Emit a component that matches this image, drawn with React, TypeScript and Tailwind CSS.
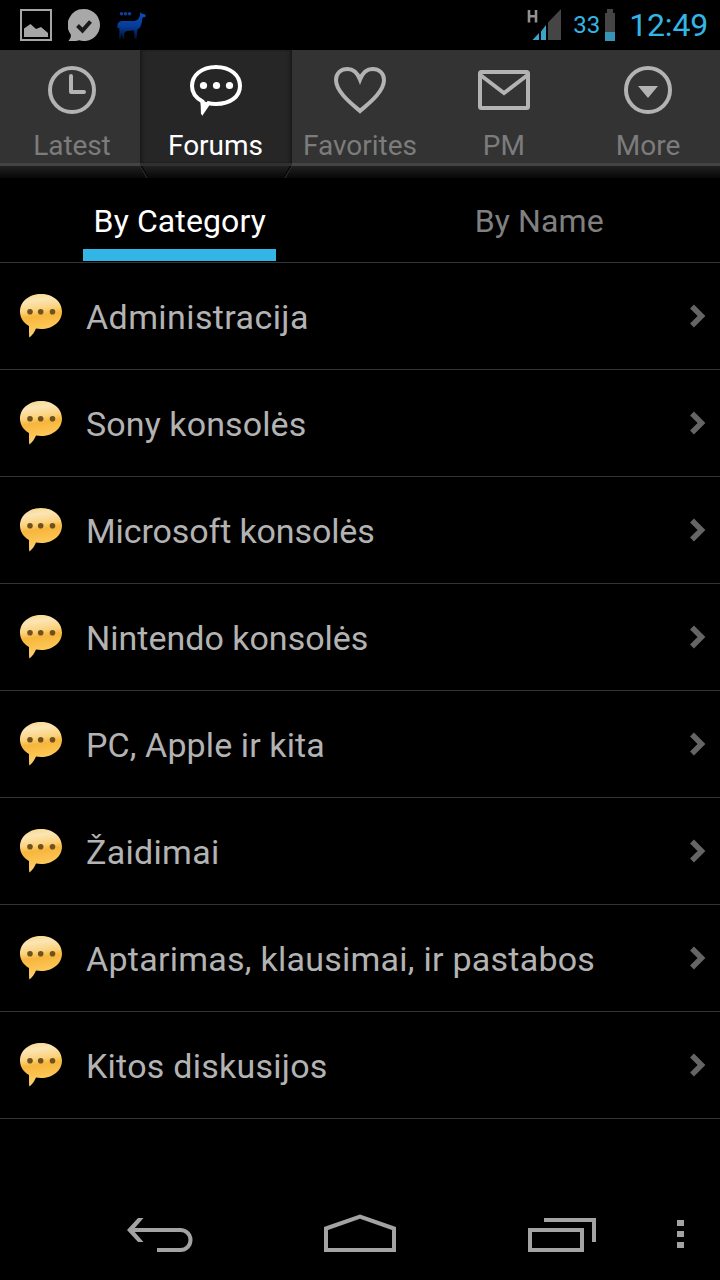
import { useState } from "react";
import type { ReactNode } from "react";
import clsx from "clsx";

const categories = [
  { name: "Administracija", tracking: "tracking-[0.4px]" },
  { name: "Sony konsolės", tracking: "tracking-[0.1px]" },
  { name: "Microsoft konsolės", tracking: "tracking-[-0.12px]" },
  { name: "Nintendo konsolės", tracking: "tracking-[0px]" },
  { name: "PC, Apple ir kita", tracking: "tracking-[0.1px]" },
  { name: "Žaidimai", tracking: "tracking-[0.3px]" },
  { name: "Aptarimas, klausimai, ir pastabos", tracking: "tracking-[0.25px]" },
  { name: "Kitos diskusijos", tracking: "tracking-[0.25px]" },
];

const ClockIcon = () => (
  <svg className="shrink-0" width="56" height="56" viewBox="0 0 56 56" fill="none" stroke="currentColor" strokeWidth="4">
    <circle cx="28" cy="28" r="22" />
    <path d="M27 14v16h13" strokeLinecap="round" strokeLinejoin="round" />
  </svg>
);

const BubbleIcon = () => (
  <svg className="shrink-0" width="56" height="56" viewBox="0 0 56 56" fill="none">
    <path
      d="M14.500 39.500C8 36 4 30.500 4 24C4 13.500 13.500 5 28 5C42.500 5 52 13.500 52 24C52 34.500 42.500 42 28 42C25.500 42 22.500 41.800 20.500 41.200L15.500 48.500Z"
      stroke="currentColor"
      strokeWidth="4"
    />
    <path d="M12.500 38L13 53Q18 48 21 41Z" fill="currentColor" />
    <circle cx="15.500" cy="23.500" r="3.600" fill="currentColor" />
    <circle cx="28.500" cy="23.500" r="3.600" fill="currentColor" />
    <circle cx="41.500" cy="23.500" r="3.600" fill="currentColor" />
  </svg>
);

const HeartIcon = () => (
  <svg className="shrink-0" width="56" height="56" viewBox="0 0 56 56" fill="none" stroke="currentColor" strokeWidth="4">
    <path d="M28 49C20 42 4 30 4 18C4 11 9 7 15.500 7C21.500 7 25.500 11 28 17.500C30.500 11 34.500 7 40.500 7C47 7 52 11 52 18C52 30 36 42 28 49Z" />
  </svg>
);

const MailIcon = () => (
  <svg className="shrink-0" width="56" height="56" viewBox="0 0 56 56" fill="none" stroke="currentColor" strokeWidth="4">
    <rect x="4" y="10" width="48" height="36" rx="1.500" />
    <path d="M5 13.500L28 31L51 13.500" />
  </svg>
);

const MoreIcon = () => (
  <svg className="shrink-0" width="56" height="56" viewBox="0 0 56 56" fill="none" stroke="currentColor" strokeWidth="4">
    <circle cx="28" cy="28" r="22" />
    <path d="M18 24h20L28 36z" fill="currentColor" stroke="none" />
  </svg>
);

const tabs: { name: string; icon: ReactNode; tracking: string }[] = [
  { name: "Latest", icon: <ClockIcon />, tracking: "tracking-[-0.1px]" },
  { name: "Forums", icon: <BubbleIcon />, tracking: "tracking-[0px]" },
  { name: "Favorites", icon: <HeartIcon />, tracking: "tracking-[0px]" },
  { name: "PM", icon: <MailIcon />, tracking: "tracking-[0.1px]" },
  { name: "More", icon: <MoreIcon />, tracking: "tracking-[0px]" },
];

const StatusBar = () => (
  <div className="flex h-[50px] items-center justify-between pl-5 pr-3">
    <div className="flex items-center">
      <svg width="32" height="32" viewBox="0 0 32 32">
        <rect x="1" y="1" width="30" height="30" fill="none" stroke="#a6a6a6" strokeWidth="2" />
        <path d="M4 28V19.500L10.500 15L16 20L21 18L28 24V28Z" fill="#a6a6a6" />
      </svg>
      <svg className="ml-4" width="32" height="32" viewBox="0 0 32 32">
        <path d="M16 0A16 16 0 1 1 11 31.200Q8 32.500 0.500 32Q3.500 29 2.800 25.500A16 16 0 0 1 16 0Z" fill="#a8a8a8" />
        <path d="M9.500 16.500L14.500 21.500L22.500 12.500" fill="none" stroke="#1a1a1a" strokeWidth="4" />
      </svg>
      <svg className="ml-4" width="32" height="32" viewBox="0 0 32 32">
        <defs>
          <linearGradient id="llama" x1="0" y1="0" x2="0" y2="1">
            <stop offset="0" stopColor="#0b50c0" />
            <stop offset="0.55" stopColor="#063a96" />
            <stop offset="1" stopColor="#020f28" />
          </linearGradient>
        </defs>
        <path
          d="M24 3L25.500 4.500L29.500 5.500V8L26.500 8.500L25.500 15Q24 19.500 21.500 20.500L20.500 30H18.500L18 21.500L10.500 22L8 24.500L8.500 30H7L5.500 24.500L4.500 30H3L3.500 22L3 18.500L1.500 19.500V15Q3 12 6 12H18.500L22 10.500L24 7Z"
          fill="url(#llama)"
        />
        <circle cx="5.500" cy="4.800" r="1.800" fill="#0a3f9a" />
        <circle cx="9.500" cy="4.800" r="1.800" fill="#0a3f9a" />
        <circle cx="13.500" cy="4.800" r="1.800" fill="#0a3f9a" />
      </svg>
    </div>
    <div className="flex items-center text-[#33b5e5]">
      <svg width="34" height="34" viewBox="0 0 34 34">
        <path d="M2 2V14.500M9 2V14.500M2 8.300H9" fill="none" stroke="#919191" strokeWidth="2.600" />
        <path d="M21 14.500L34 1V32H21Z" fill="#454545" />
        <path d="M5.500 32L12 25V32ZM14 32V23.500L19 17V32Z" fill="#3ba3c9" />
      </svg>
      <span className="ml-3 w-[27px] text-[24px] leading-8">33</span>
      <svg className="ml-[5px]" width="10" height="32" viewBox="0 0 10 32">
        <path d="M2 0H8V4H10V32H0V4H2Z" fill="#454545" />
        <path d="M0 23H10V32H0Z" fill="#3795b8" />
      </svg>
      <span className="pl-3.5 text-[32px] leading-9 tracking-[-0.2px]">12:49</span>
    </div>
  </div>
);

const TabBar = () => {
  const [active, setActive] = useState("Forums");

  return (
    <div className="h-32 bg-linear-to-b from-[#212121] from-[116px] to-[#080808] to-[128px]">
      <div className="flex h-32">
        {tabs.map((tab) => {
          const selected = tab.name === active;
          return (
            <button
              key={tab.name}
              onClick={() => setActive(tab.name)}
              className={clsx(
                "flex flex-col items-center",
                selected ? "z-10 -mx-1 w-[152px] text-white" : "w-36 text-[#b3b3b3]"
              )}
            >
              <span
                className={clsx(
                  "flex h-[116px] w-full flex-col items-center border-b-[3px] pt-3",
                  selected
                    ? "border-[#303030] bg-[#262626] shadow-[inset_4px_0_4px_-3px_#111,inset_-4px_0_4px_-3px_#111]"
                    : "border-[#444] bg-[#333]"
                )}
              >
                {tab.icon}
                <span
                  className={clsx(
                    "mt-2.5 text-[28px] leading-9",
                    tab.tracking,
                    selected ? "pr-px text-white" : "text-[#7c7c7c]"
                  )}
                >
                  {tab.name}
                </span>
              </span>
              {/* chamfered edge under the selected tab */}
              {selected && (
                <svg width="152" height="12" viewBox="0 0 152 12" fill="none">
                  <path d="M1 0L8 12M151 0L144 12" stroke="#080808" strokeWidth="2" />
                  <path d="M0 0L7 12M152 0L145 12" stroke="#333" strokeWidth="1" />
                </svg>
              )}
            </button>
          );
        })}
      </div>
    </div>
  );
};

const SortTabs = () => {
  const [sort, setSort] = useState("By Category");

  return (
    <div className="flex h-[85px] justify-around border-b border-[#333] pr-px">
      {["By Category", "By Name"].map((name) => (
        <button
          key={name}
          onClick={() => setSort(name)}
          className={clsx(
            "mt-px flex h-[82px] w-[193px] flex-col items-center pt-[23px] text-[32px] leading-[38px]",
            sort === name ? "border-b-12 border-[#33b5e5] text-white" : "text-[#808080]"
          )}
        >
          <span className="whitespace-nowrap tracking-[0.1px]">{name}</span>
        </button>
      ))}
    </div>
  );
};

const CategoryRow = ({ name, tracking }: { name: string; tracking: string }) => (
  <li className="flex h-[107px] items-center border-b border-[#333] pl-5 pr-3.5">
    <svg width="42" height="44" viewBox="0 0 42 44">
      <defs>
        <linearGradient id="bubble" x1="0" y1="0" x2="0.15" y2="1">
          <stop offset="0" stopColor="#f8d583" />
          <stop offset="0.2" stopColor="#fbe5b4" />
          <stop offset="0.42" stopColor="#fbd27c" />
          <stop offset="0.55" stopColor="#f7b63c" />
          <stop offset="0.8" stopColor="#fcc453" />
          <stop offset="1" stopColor="#f8d27a" />
        </linearGradient>
      </defs>
      <path
        d="M21 0C33 0 42 7.500 42 17.500C42 27.500 33 35 21 35C19 35 17.500 34.800 16 34.500C14.500 38 12.500 41 9.500 43.500C9 43 9 37.500 9 32C3.500 29 0 23.500 0 17.500C0 7.500 9 0 21 0Z"
        fill="url(#bubble)"
      />
      <circle cx="10" cy="17.800" r="2.800" fill="#70501c" />
      <circle cx="20.700" cy="17.800" r="2.800" fill="#70501c" />
      <circle cx="32.500" cy="17.800" r="2.800" fill="#70501c" />
    </svg>
    <span className={clsx("ml-6 grow pt-0.5 text-[34px] leading-10 text-[#b3b3b3]", tracking)}>{name}</span>
    <svg width="17" height="24" viewBox="0 0 17 24" fill="none">
      <path d="M3 2.500L12.500 12L3 21.500" stroke="#656565" strokeWidth="5.500" />
    </svg>
  </li>
);

const NavBar = () => (
  <div className="flex h-24 items-center pl-[126px] pt-1 text-[#a3a3a3]">
    <svg width="68" height="40" viewBox="0 0 68 40" fill="none" stroke="currentColor" strokeWidth="4">
      <path d="M5 16H54.500A10 10 0 0 1 54.500 36H31" />
      <path d="M12 4H17.500L7 16L17.500 28H12L1 16Z" fill="currentColor" stroke="none" />
    </svg>
    <svg className="ml-[130px]" width="72" height="40" viewBox="0 0 72 40" fill="none" stroke="currentColor" strokeWidth="4">
      <path d="M2 14.500L36 2.500L70 14.500V36H2Z" />
    </svg>
    <svg className="ml-[132px]" width="68" height="40" viewBox="0 0 68 40" fill="none" stroke="currentColor" strokeWidth="4">
      <path d="M2 16H54V36H2ZM16 6H66V28" />
    </svg>
    <svg className="ml-[81px]" width="7" height="28" viewBox="0 0 7 28" fill="currentColor">
      <path d="M0 0H7V6H0ZM0 11H7V17H0ZM0 22H7V28H0Z" />
    </svg>
  </div>
);

const App = () => {
  return (
    <div className="flex h-[1280px] w-[720px] flex-col overflow-hidden bg-black font-['Roboto',sans-serif]">
      <StatusBar />
      <TabBar />
      <SortTabs />
      <ul className="grow">
        {categories.map((category) => (
          <CategoryRow key={category.name} {...category} />
        ))}
      </ul>
      <NavBar />
    </div>
  );
};

export default App;
